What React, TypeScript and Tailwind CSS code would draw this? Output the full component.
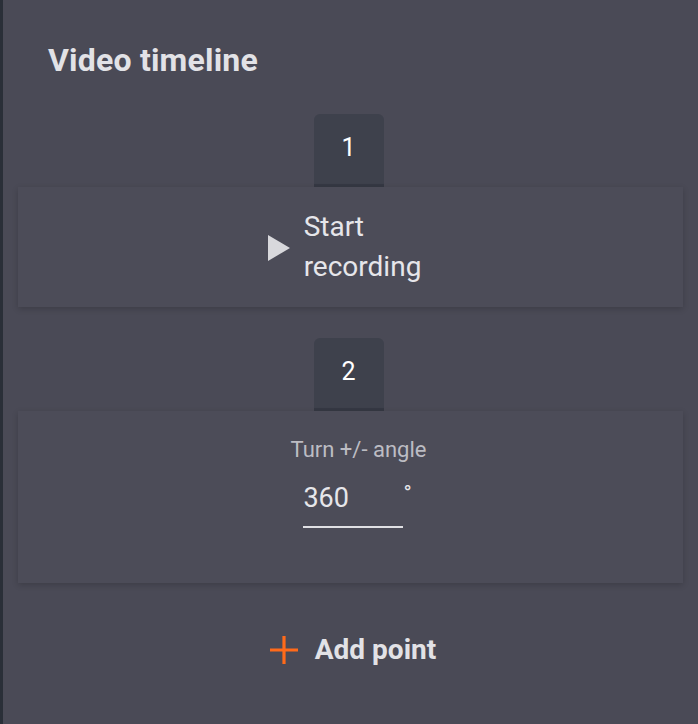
function StepTab({ n }: { n: number }) {
  return (
    <div className="flex justify-center pr-[4px]">
      <div className="flex h-[73px] w-[70px] items-center justify-center rounded-t-[6px] border-b-[3px] border-[#353843] bg-[#3e414c] pb-[2px] text-[25px] text-white">
        {n}
      </div>
    </div>
  );
}

export default function App() {
  return (
    <div
      className="flex min-h-screen border-l-[3px] border-[#2a2f38] bg-[#4a4a56] text-[#e4e4e8]"
      style={{ fontFamily: "Roboto, 'Noto Sans', sans-serif" }}
    >
      <div className="flex w-full flex-col pt-[37px]">
        <h1 className="pl-[45px] text-[32px] font-bold leading-[46px] tracking-[0.2px] text-[#e2e2e6]">Video timeline</h1>

        <div className="mt-[31px] flex flex-col">
          <StepTab n={1} />
          <div className="mx-[15px] flex h-[120px] items-center justify-center bg-[#4c4c58] shadow-[0_2px_6px_rgba(0,0,0,0.18)]">
            <div className="flex items-center gap-[14px] pr-[12px]">
              <svg width="22" height="26" viewBox="0 0 22 26" className="mt-[2px]">
                <path d="M0 0 L22 13 L0 26 Z" fill="#d8d8dc" />
              </svg>
              <div className="text-[28px] leading-[40px] text-[#e6e6ea]">
                Start
                <br />
                recording
              </div>
            </div>
          </div>

          <div className="mt-[31px]">
            <StepTab n={2} />
          </div>
          <div className="mx-[15px] flex h-[172px] flex-col items-center bg-[#4c4c58] pt-[24px] shadow-[0_2px_6px_rgba(0,0,0,0.18)]">
            <div className="pl-[16px] text-[22px] leading-[30px] text-[#bcbcc3]">Turn +/- angle</div>
            <div className="mt-[17px] flex items-start pl-[14px]">
              <div className="w-[100px] border-b-2 border-[#e0e0e4] pb-[12px] text-[27px] leading-[32px] text-[#e6e6ea]">
                360
              </div>
              <span className="text-[22px] leading-[24px] text-[#e6e6ea]">°</span>
            </div>
          </div>

          <div className="mt-[46px] flex items-center justify-center gap-[17px] pl-[5px]">
            <svg width="28" height="28" viewBox="0 0 28 28">
              <path d="M14 0 V28 M0 14 H28" stroke="#ff6a1a" strokeWidth="3.2" />
            </svg>
            <span className="text-[28px] font-bold text-[#e2e2e6]">Add point</span>
          </div>
        </div>
      </div>
    </div>
  );
}
